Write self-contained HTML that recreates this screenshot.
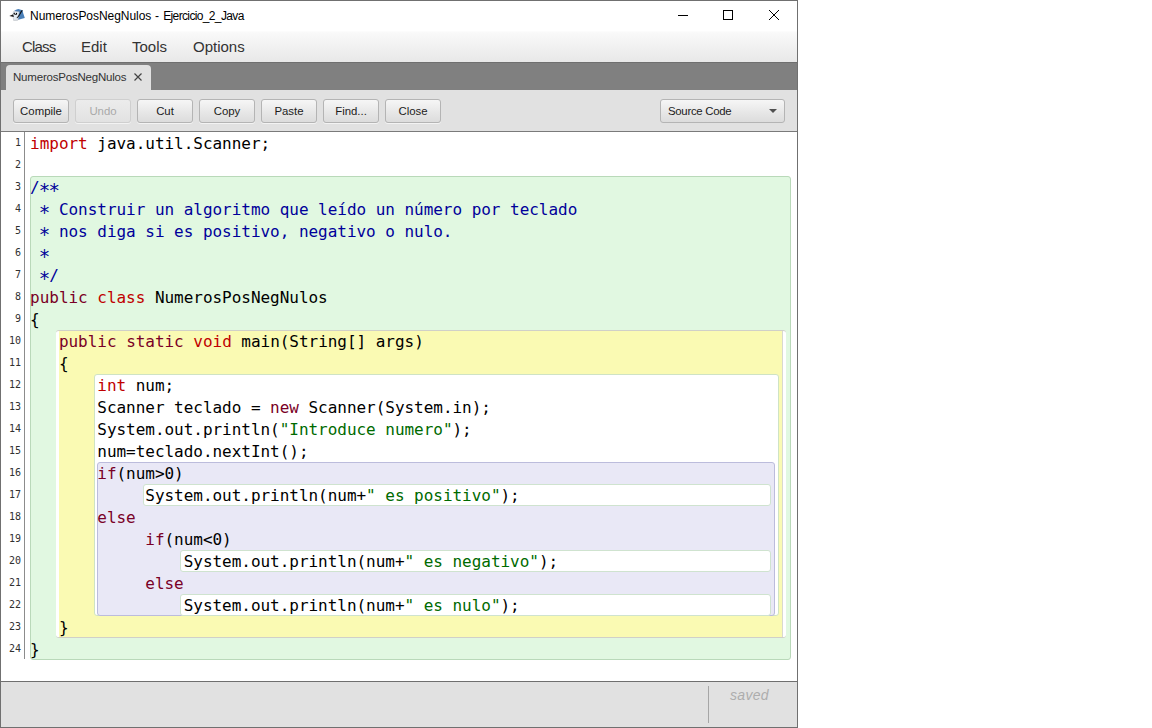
<!DOCTYPE html>
<html lang="es">
<head>
<meta charset="utf-8">
<title>NumerosPosNegNulos - Ejercicio_2_Java</title>
<style>
*{box-sizing:border-box;margin:0;padding:0}
html,body{width:1152px;height:728px;overflow:hidden;background:#fff}
body{position:relative;font-family:"Liberation Sans","DejaVu Sans",sans-serif;color:#000}
.abs{position:absolute}
#win{position:absolute;left:0;top:0;width:798px;height:728px;border:1px solid #707070;background:#fff;overflow:hidden}
/* coordinates inside #win are offset by the 1px border: use a wrapper shifted -1 */
#in{position:absolute;left:-1px;top:-1px;width:798px;height:728px}
#title{position:absolute;left:1px;top:1px;width:796px;height:30px;background:#fff}
#ttext{position:absolute;left:30px;top:9px;font-size:12px;line-height:15px;white-space:nowrap;letter-spacing:-0.28px}
#menubar{position:absolute;left:1px;top:31px;width:796px;height:31px;background:linear-gradient(#fdfdfd 0,#f9f9f9 6%,#e8e8e8 100%)}
.mi{position:absolute;top:38px;font-size:15px;line-height:18px;color:#333;white-space:nowrap}
#tabbar{position:absolute;left:1px;top:62px;width:796px;height:28px;background:#808080;border-top:1px solid #6f6f6f}
#tab{position:absolute;left:6px;top:65px;width:145px;height:25px;background:#e1e1e1;border-radius:4px 4px 0 0}
#tabtext{position:absolute;left:13px;top:70.2px;font-size:11.5px;line-height:14px;color:#333;white-space:nowrap;letter-spacing:-0.2px}
#toolbar{position:absolute;left:1px;top:90px;width:796px;height:41px;background:#e1e1e1}
.btn{position:absolute;top:99px;height:24px;width:56px;border:1px solid #b4b4b4;border-radius:3px;background:linear-gradient(#f6f6f6,#e6e6e6 60%,#dcdcdc);font-size:11.4px;line-height:22px;text-align:center;color:#1c1c1c;white-space:nowrap;box-shadow:0 1px 0 rgba(255,255,255,.6)}
.btn.dis{color:#a9a9a9;border-color:#cfcfcf;background:linear-gradient(#ececec,#e2e2e2)}
#combo{position:absolute;left:660px;top:99px;width:125px;height:24px;border:1px solid #b4b4b4;border-radius:3px;background:linear-gradient(#f6f6f6,#e6e6e6 60%,#dcdcdc);font-size:11.4px;line-height:22px;color:#1c1c1c;padding-left:7px;white-space:nowrap;letter-spacing:-0.28px}
#combo i{position:absolute;right:7px;top:9px;width:0;height:0;border-left:4px solid transparent;border-right:4px solid transparent;border-top:4px solid #505050}
#edtop{position:absolute;left:1px;top:131px;width:796px;height:1px;background:#7a7a7a}
#gutline{position:absolute;left:24px;top:132px;width:1px;height:527px;background:#8c8c8c}
.ln{position:absolute;left:1px;width:20px;text-align:right;font-family:"DejaVu Sans Mono","Liberation Mono",monospace;font-size:10px;line-height:12px;color:#303030}
.box{position:absolute}
.code{position:absolute;left:30.1px;font-family:"DejaVu Sans Mono","Liberation Mono",monospace;font-size:16px;line-height:22px;height:22px;white-space:pre;letter-spacing:-0.033px;color:#000}
.a{position:relative;top:4px;left:-0.9px;font-size:19px;line-height:0;letter-spacing:-1.87px}.k{color:#c00000}.k2{color:#7a0026}.c{color:#00009a}.s{color:#006a00}
#status{position:absolute;left:1px;top:681px;width:796px;height:46px;background:#e1e1e1;border-top:1px solid #6f6f6f}
#sdiv{position:absolute;left:708px;top:686px;width:1px;height:37px;background:#a6a6a6}
#saved{position:absolute;left:730px;top:687px;font-size:14px;line-height:17px;font-style:italic;color:#adadad;letter-spacing:0.3px}
</style>
</head>
<body>
<div id="win"><div id="in">
<div id="title"></div>
<svg class="abs" style="left:6px;top:4px" width="24" height="22" viewBox="6 4 24 22">
<path d="M13.8 11.2 L16 9.8 L18.3 9 L22.6 10.2 L23.3 13.5 L24.8 18 L21 19 L18.1 19.8 L17 15 Z" fill="#4a7fb8"/>
<path d="M13.3 12 L14.2 11 L19.3 11.8 L18.6 15 L18.2 19.8 L13.6 20.2 L13.2 17 Z" fill="#e4ebf2" stroke="#8a93a0" stroke-width="0.3"/>
<path d="M13.3 20.3 L18.2 19.9 L17.5 20.8 L13.6 21 Z" fill="#c9cdd2"/>
<path d="M9.300 16 L13.200 14.200 L13.900 16.900 Z" fill="#151515"/>
<path d="M13.200 13.200 L14.500 12.500 L15.500 14.200 L17 13.800 L17.200 14.500 L15 15 Z" fill="#1a1a1a"/>
<path d="M21.200 10.400 L22.800 10.300 L19.500 15.800 L17.200 18.300 L16.500 18 L19.200 14.500 Z" fill="#0d0d0d"/>
<circle cx="16.500" cy="13.500" r="0.650" fill="#000"/>
</svg>
<div id="ttext"><span style="letter-spacing:-0.04px">NumerosPosNegNulos</span><span style="letter-spacing:0.4px"> - </span><span style="letter-spacing:-0.64px">Ejercicio_2_Java</span></div>
<svg class="abs" style="left:672px;top:5px" width="112" height="22" viewBox="0 0 112 22" fill="none" stroke="#000" stroke-width="1">
<path d="M6 10.5 H16"/>
<rect x="51.5" y="5.500" width="9" height="9"/>
<path d="M97 5 L107 15 M107 5 L97 15" stroke-width="1"/>
</svg>
<div id="menubar"></div>
<div class="mi" style="left:22px;letter-spacing:-0.8px">Class</div>
<div class="mi" style="left:81px">Edit</div>
<div class="mi" style="left:132px">Tools</div>
<div class="mi" style="left:193px">Options</div>
<div id="tabbar"></div>
<div id="tab"></div>
<div id="tabtext">NumerosPosNegNulos</div>
<svg class="abs" style="left:133px;top:72px" width="10" height="10" viewBox="0 0 10 10" stroke="#444" stroke-width="1.2" fill="none"><path d="M1.500 1.500 L8.500 8.500 M8.500 1.500 L1.500 8.500"/></svg>
<div id="toolbar"></div>
<div class="btn" style="left:13px">Compile</div>
<div class="btn dis" style="left:75px">Undo</div>
<div class="btn" style="left:137px">Cut</div>
<div class="btn" style="left:199px">Copy</div>
<div class="btn" style="left:261px">Paste</div>
<div class="btn" style="left:323px">Find...</div>
<div class="btn" style="left:385px">Close</div>
<div id="combo">Source Code<i></i></div>
<div id="edtop"></div>
<div id="gutline"></div>
<!--LN-->
<div class="ln" style="top:136.5px">1</div>
<div class="ln" style="top:158.5px">2</div>
<div class="ln" style="top:180.5px">3</div>
<div class="ln" style="top:202.5px">4</div>
<div class="ln" style="top:224.5px">5</div>
<div class="ln" style="top:246.5px">6</div>
<div class="ln" style="top:268.5px">7</div>
<div class="ln" style="top:290.5px">8</div>
<div class="ln" style="top:312.5px">9</div>
<div class="ln" style="top:334.5px">10</div>
<div class="ln" style="top:356.5px">11</div>
<div class="ln" style="top:378.5px">12</div>
<div class="ln" style="top:400.5px">13</div>
<div class="ln" style="top:422.5px">14</div>
<div class="ln" style="top:444.5px">15</div>
<div class="ln" style="top:466.5px">16</div>
<div class="ln" style="top:488.5px">17</div>
<div class="ln" style="top:510.5px">18</div>
<div class="ln" style="top:532.5px">19</div>
<div class="ln" style="top:554.5px">20</div>
<div class="ln" style="top:576.5px">21</div>
<div class="ln" style="top:598.5px">22</div>
<div class="ln" style="top:620.5px">23</div>
<div class="ln" style="top:642.5px">24</div>
<!--/LN-->
<!--BOXES-->
<div class="box" style="left:30px;top:176px;width:761px;height:484px;background:#e1f8e1;border:1px solid #b9d9b9;border-radius:3px"></div>
<div class="box" style="left:56px;top:330px;width:730px;height:308px;background:#fff;border-top:1px solid #d0d0c8;border-bottom:1px solid #d0d0c8;border-radius:3px"></div>
<div class="box" style="left:59px;top:331px;width:724px;height:306px;background:#fafab3;border-right:1px solid #d9d9cf"></div>
<div class="box" style="left:94px;top:374px;width:685px;height:242px;background:#fff;border:1px solid #cfe3c4;border-radius:3px"></div>
<div class="box" style="left:97px;top:462px;width:678px;height:154px;background:#e9e8f6;border:1px solid #bcbcdc;border-radius:3px"></div>
<div class="box" style="left:143px;top:484px;width:628px;height:22px;background:#fff;border:1px solid #cfe3cf;border-radius:3px"></div>
<div class="box" style="left:180px;top:550px;width:591px;height:22px;background:#fff;border:1px solid #cfe3cf;border-radius:3px"></div>
<div class="box" style="left:180px;top:594px;width:591px;height:22px;background:#fff;border:1px solid #cfe3cf;border-radius:3px"></div>
<!--/BOXES-->
<!--CODE-->
<div class="code" style="top:133px"><span class="k">import</span> java.util.Scanner;</div>
<div class="code" style="top:177px"><span class="c">/<span class="a">*</span><span class="a">*</span></span></div>
<div class="code" style="top:199px"><span class="c"> <span class="a">*</span> Construir un algoritmo que leído un número por teclado</span></div>
<div class="code" style="top:221px"><span class="c"> <span class="a">*</span> nos diga si es positivo, negativo o nulo.</span></div>
<div class="code" style="top:243px"><span class="c"> <span class="a">*</span></span></div>
<div class="code" style="top:265px"><span class="c"> <span class="a">*</span>/</span></div>
<div class="code" style="top:287px"><span class="k2">public</span> <span class="k">class</span> NumerosPosNegNulos</div>
<div class="code" style="top:309px">{</div>
<div class="code" style="top:331px">   <span class="k2">public</span> <span class="k2">static</span> <span class="k">void</span> main(String[] args)</div>
<div class="code" style="top:353px">   {</div>
<div class="code" style="top:375px">       <span class="k">int</span> num;</div>
<div class="code" style="top:397px">       Scanner teclado = <span class="k2">new</span> Scanner(System.in);</div>
<div class="code" style="top:419px">       System.out.println(<span class="s">"Introduce numero"</span>);</div>
<div class="code" style="top:441px">       num=teclado.nextInt();</div>
<div class="code" style="top:463px">       <span class="k2">if</span>(num&gt;0)</div>
<div class="code" style="top:485px">            System.out.println(num+<span class="s">" es positivo"</span>);</div>
<div class="code" style="top:507px">       <span class="k2">else</span></div>
<div class="code" style="top:529px">            <span class="k2">if</span>(num&lt;0)</div>
<div class="code" style="top:551px">                System.out.println(num+<span class="s">" es negativo"</span>);</div>
<div class="code" style="top:573px">            <span class="k2">else</span></div>
<div class="code" style="top:595px">                System.out.println(num+<span class="s">" es nulo"</span>);</div>
<div class="code" style="top:617px">   }</div>
<div class="code" style="top:639px">}</div>
<!--/CODE-->
<div id="status"></div>
<div id="sdiv"></div>
<div id="saved">saved</div>
</div></div>
</body>
</html>
